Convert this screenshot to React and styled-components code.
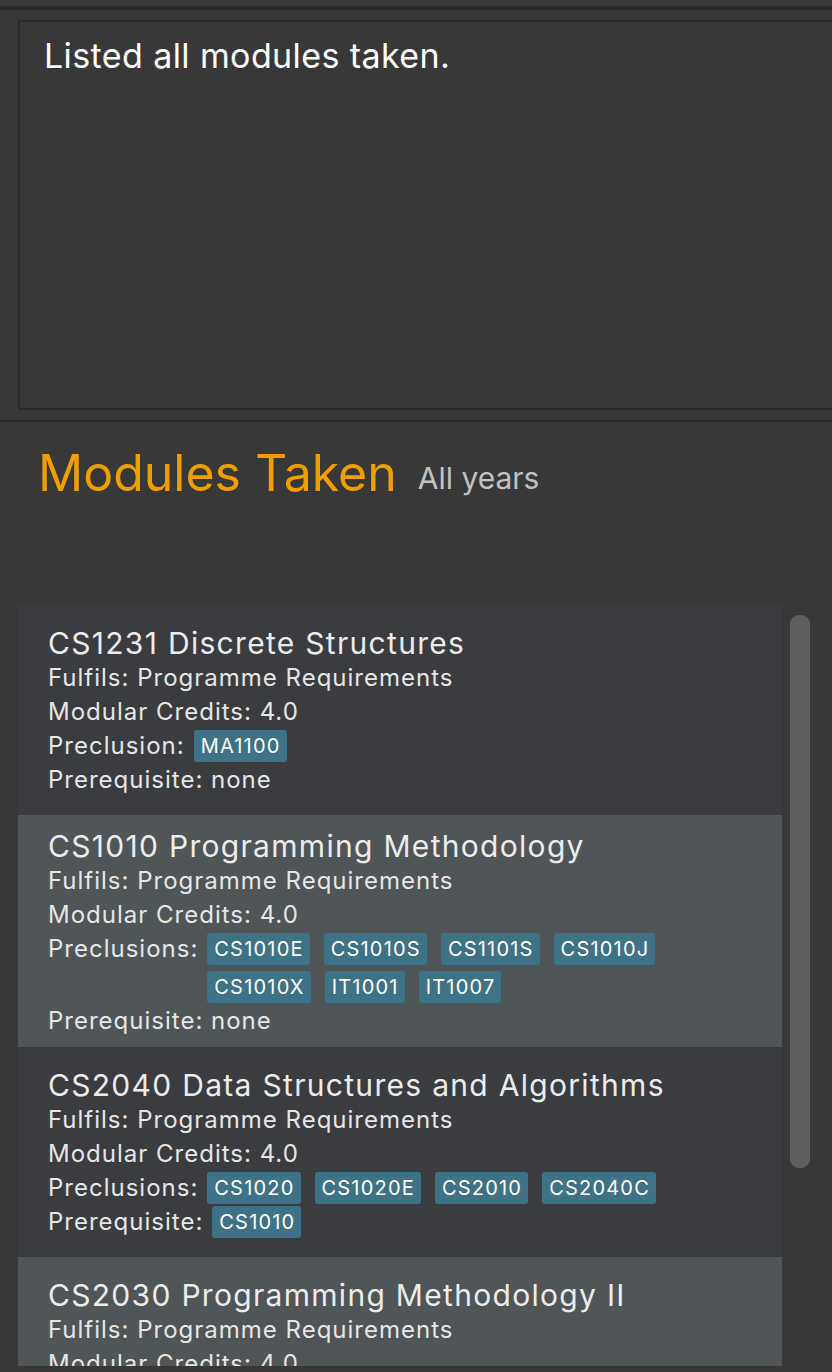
import React from 'react';
import styled, { createGlobalStyle } from 'styled-components';

const GlobalStyle = createGlobalStyle`
  html, body {
    margin: 0;
    padding: 0;
    background-color: #383838;
    overflow: hidden;
  }
  body {
    font-family: Inter, "Noto Sans", "Liberation Sans", sans-serif;
  }
`;

const Page = styled.div`
  display: flex;
  flex-direction: column;
  width: 832px;
  height: 1372px;
  overflow: hidden;
  background-color: #383838;
`;

const TopStrip = styled.div`
  height: 6px;
  background-color: #3a3a3a;
`;

const TopDivider = styled.div`
  height: 4px;
  background-color: #2b2b2b;
`;

const ResultPane = styled.div`
  padding: 10px 0 0 18px;
`;

const ResultBox = styled.div`
  box-sizing: border-box;
  height: 390px;
  width: 840px;
  border: 2px solid #2c2c2c;
  padding: 13px 0 0 24px;
  color: #ffffff;
  font-size: 34px;
  line-height: normal;
  letter-spacing: 0.4px;
`;

const SectionDivider = styled.div`
  height: 2px;
  margin-top: 10px;
  background-color: #2b2b2b;
`;

const HeadingSection = styled.div`
  box-sizing: border-box;
  height: 183px;
  padding: 21px 0 0 38px;
  display: flex;
  align-items: baseline;
  gap: 21px;
`;

const Heading = styled.h1`
  margin: 0;
  font-size: 50px;
  font-weight: 400;
  color: #f09f00;
`;

const SubHeading = styled.span`
  font-size: 30px;
  color: #c2c2c2;
  position: relative;
  top: -2px;
`;

const ListArea = styled.div`
  display: flex;
  gap: 8px;
  padding-left: 18px;
  height: 761px;
`;

const List = styled.div`
  width: 764px;
  height: 100%;
  overflow: hidden;
  display: flex;
  flex-direction: column;
`;

const ScrollThumb = styled.div`
  width: 20px;
  height: 553px;
  margin-top: 10px;
  border-radius: 9px;
  background-color: #5f5f5f;
`;

const Card = styled.div`
  flex: none;
  padding: ${(p) => (p.$tight ? '13px 0 9px 30px' : '20px 0 18px 30px')};
  background-color: ${(p) => (p.$alt ? '#505558' : '#3b3c3f')};
  color: #e6e6e6;
`;

const Title = styled.div`
  font-size: 30px;
  line-height: 36px;
  letter-spacing: 1.3px;
  color: #ececec;
`;

const Line = styled.div`
  font-size: 24px;
  line-height: 34px;
  letter-spacing: 1px;
`;

const TagLine = styled(Line)`
  display: flex;
  align-items: flex-start;
  gap: 9px;
`;

const TagFlow = styled.div`
  display: flex;
  flex-wrap: wrap;
  column-gap: 14px;
  row-gap: 6px;
  max-width: 470px;
  padding: 1px 0;
`;

const Tag = styled.span`
  display: inline-flex;
  align-items: center;
  height: 32px;
  padding: 0 6px 0 7px;
  border-radius: 3px;
  background-color: #3e7286;
  color: #ffffff;
  font-size: 20px;
  line-height: 1;
  letter-spacing: 1.2px;
`;

const modules = [
  {
    code: 'CS1231',
    name: 'Discrete Structures',
    preclusionLabel: 'Preclusion',
    preclusions: ['MA1100'],
    prerequisites: [],
  },
  {
    code: 'CS1010',
    name: 'Programming Methodology',
    preclusionLabel: 'Preclusions',
    preclusions: ['CS1010E', 'CS1010S', 'CS1101S', 'CS1010J', 'CS1010X', 'IT1001', 'IT1007'],
    prerequisites: [],
    tight: true,
  },
  {
    code: 'CS2040',
    name: 'Data Structures and Algorithms',
    preclusionLabel: 'Preclusions',
    preclusions: ['CS1020', 'CS1020E', 'CS2010', 'CS2040C'],
    prerequisites: ['CS1010'],
  },
  {
    code: 'CS2030',
    name: 'Programming Methodology II',
    preclusionLabel: 'Preclusion',
    preclusions: ['CS1020'],
    prerequisites: ['CS1010'],
  },
];

const TagField = ({ label, tags }) => {
  if (tags.length === 0) {
    return <Line>{label}: none</Line>;
  }
  return (
    <TagLine>
      <span>{label}:</span>
      <TagFlow>
        {tags.map((t) => (
          <Tag key={t}>{t}</Tag>
        ))}
      </TagFlow>
    </TagLine>
  );
};

const ModuleCard = ({ mod, index }) => (
  <Card $alt={index % 2 === 1} $tight={mod.tight}>
    <Title>
      {mod.code} {mod.name}
    </Title>
    <Line>Fulfils: Programme Requirements</Line>
    <Line>Modular Credits: 4.0</Line>
    <TagField label={mod.preclusionLabel} tags={mod.preclusions} />
    <TagField label="Prerequisite" tags={mod.prerequisites} />
  </Card>
);

const App = () => (
  <Page>
    <GlobalStyle />
    <TopStrip />
    <TopDivider />
    <ResultPane>
      <ResultBox>Listed all modules taken.</ResultBox>
    </ResultPane>
    <SectionDivider />
    <HeadingSection>
      <Heading>Modules Taken</Heading>
      <SubHeading>All years</SubHeading>
    </HeadingSection>
    <ListArea>
      <List>
        {modules.map((m, i) => (
          <ModuleCard key={m.code} mod={m} index={i} />
        ))}
      </List>
      <ScrollThumb />
    </ListArea>
  </Page>
);

export default App;
